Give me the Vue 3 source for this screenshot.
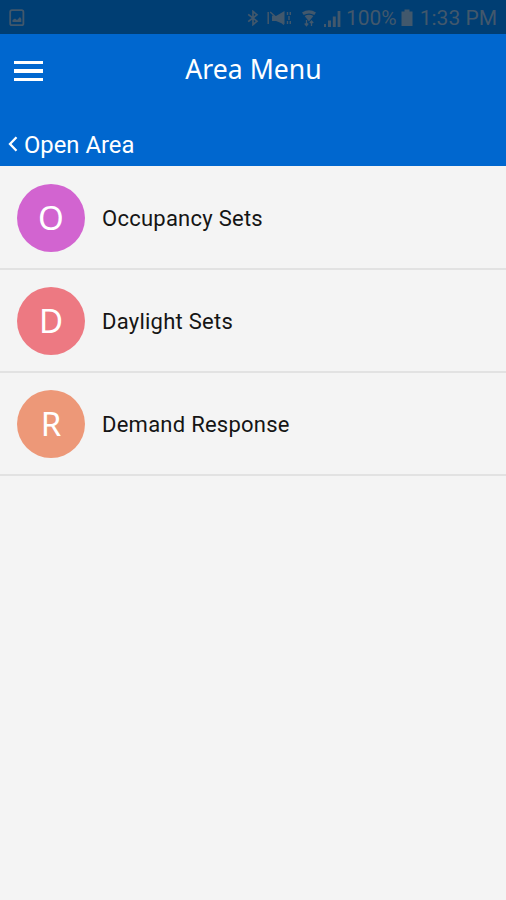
<template>
  <div class="screen">
    <div class="status-bar">
      <svg class="picture" width="16" height="18" viewBox="0 0 16 18">
        <rect x="1.2" y="1.2" width="13.2" height="15" rx="1.8" fill="none" stroke="currentColor" stroke-width="1.8" />
        <path d="M3.5 13V11L6 9.5L8 11L11 8L12.3 10V13Z" fill="currentColor" />
      </svg>
      <div class="status-right">
        <svg class="bluetooth" width="12" height="16" viewBox="0 0 12 16">
          <path d="M1.2 4.3L10 11.2L6 14.6V1.4L10 4.8L1.2 11.7" fill="none" stroke="currentColor" stroke-width="1.7" />
        </svg>
        <svg class="mute" width="25" height="16" viewBox="0 0 25 16">
          <path d="M1.2 14V2M3.2 2L17 14.5" fill="none" stroke="currentColor" stroke-width="1.5" />
          <path d="M9 6L17.5 1V14L14 13L9 11H5V5.5Z" fill="currentColor" />
          <path d="M20.5 2V5M20.5 11V14M23.3 2V5M22 6V10M23.3 11V14" stroke="currentColor" stroke-width="1.4" />
        </svg>
        <svg class="wifi" width="16" height="18" viewBox="0 0 16 18">
          <path d="M1 3.5Q8 -0.8 15 3.5L13.3 6Q8 2.8 2.7 6Z" fill="currentColor" />
          <path d="M3.6 7Q8 4.4 12.4 7L8 12.5Z" fill="currentColor" />
          <path d="M5.5 11V16.5M3.7 14.5L5.5 16.7L7.2 14.5M10.5 17V12M8.8 14L10.5 12L12.2 14" fill="none" stroke="currentColor" stroke-width="1.3" />
        </svg>
        <svg class="signal" width="18" height="17" viewBox="0 0 18 17">
          <path d="M1 14H3V17H1ZM5 10.5H8V17H5ZM9.8 6.5H12.8V17H9.8ZM14.6 1H17.4V17H14.6Z" fill="currentColor" />
        </svg>
        <span class="percent">100%</span>
        <svg class="battery" width="12" height="18" viewBox="0 0 12 18">
          <path d="M3.5 0.5H8.5V2.5H11.5V17H0.5V2.5H3.5Z" fill="currentColor" />
        </svg>
        <span class="clock">1:33 PM</span>
      </div>
    </div>

    <header class="header">
      <div class="title-row">
        <button class="menu-button" aria-label="Menu">
          <span></span>
          <span></span>
          <span></span>
        </button>
        <h1>Area Menu</h1>
      </div>
      <a class="back">
        <svg width="10" height="16" viewBox="0 0 10 16">
          <path d="M8.5 1.2L2 8L8.5 14.8" fill="none" stroke="currentColor" stroke-width="2.3" />
        </svg>
        <span>Open Area</span>
      </a>
    </header>

    <ul class="list">
      <li v-for="item in items" :key="item.name">
        <span class="avatar" :class="item.color">{{ item.letter }}</span>
        <span class="name">{{ item.name }}</span>
      </li>
    </ul>
  </div>
</template>

<script setup>
import { ref } from 'vue';

const items = ref([
  { letter: 'O', name: 'Occupancy Sets', color: 'purple' },
  { letter: 'D', name: 'Daylight Sets', color: 'pink' },
  { letter: 'R', name: 'Demand Response', color: 'orange' },
]);
</script>

<style>
body {
  margin: 0;
  background: #f4f4f4;
}
</style>

<style scoped>
.screen {
  height: 900px;
  overflow: hidden;
  background: #f4f4f4;
  font-family: Roboto, sans-serif;
}
.status-bar {
  display: flex;
  justify-content: space-between;
  box-sizing: border-box;
  height: 34px;
  padding: 0 9px;
  background: #003e73;
  color: #42586c;
}
.status-bar svg {
  display: block;
  flex: none;
}
.picture {
  margin-top: 9px;
}
.status-right {
  display: flex;
  align-items: center;
  padding-top: 2px;
}
.mute {
  margin-left: 8px;
}
.wifi {
  margin-left: 9px;
}
.signal {
  margin-left: 6px;
}
.percent,
.clock {
  font-size: 21px;
  line-height: 32px;
  white-space: nowrap;
}
.percent {
  margin-left: 5px;
}
.battery {
  margin-left: 4px;
}
.clock {
  margin-left: 7px;
}
.header {
  box-sizing: border-box;
  height: 132px;
  background: #0067cf;
  color: #fff;
}
.title-row {
  display: grid;
  grid-template-columns: 57px 1fr 56px;
  align-items: center;
  height: 72px;
}
.menu-button {
  display: flex;
  flex-direction: column;
  gap: 5.5px;
  margin: 2px 0 0 14px;
  padding: 0;
  width: 29px;
  border: 0;
  background: none;
}
.menu-button span {
  width: 29px;
  height: 3.3px;
  background: #fff;
}
h1 {
  margin: 0 0 2px;
  font: 400 26.6px/36px "Noto Sans", sans-serif;
  text-align: center;
}
.back {
  display: flex;
  align-items: center;
  height: 60px;
  padding: 17px 0 0 8px;
  box-sizing: border-box;
  font-size: 23.8px;
}
.back svg {
  margin-top: -1px;
}
.back span {
  margin-left: 6px;
}
.list {
  margin: 0;
  padding: 1.5px 0 0;
  list-style: none;
}
.list li {
  display: flex;
  align-items: center;
  box-sizing: border-box;
  height: 102.9px;
  padding-left: 17px;
  border-bottom: 2px solid #e2e2e2;
}
.avatar {
  display: flex;
  align-items: center;
  justify-content: center;
  width: 68px;
  height: 68px;
  border-radius: 50%;
  color: #fff;
  font: 400 33px/68px "Noto Sans", sans-serif;
}
.purple {
  background: #d264d0;
}
.pink {
  background: #ed7982;
}
.orange {
  background: #ed9878;
}
.name {
  margin-left: 17px;
  padding-top: 1px;
  color: #151515;
  font-size: 22px;
  letter-spacing: 0.25px;
}
</style>
